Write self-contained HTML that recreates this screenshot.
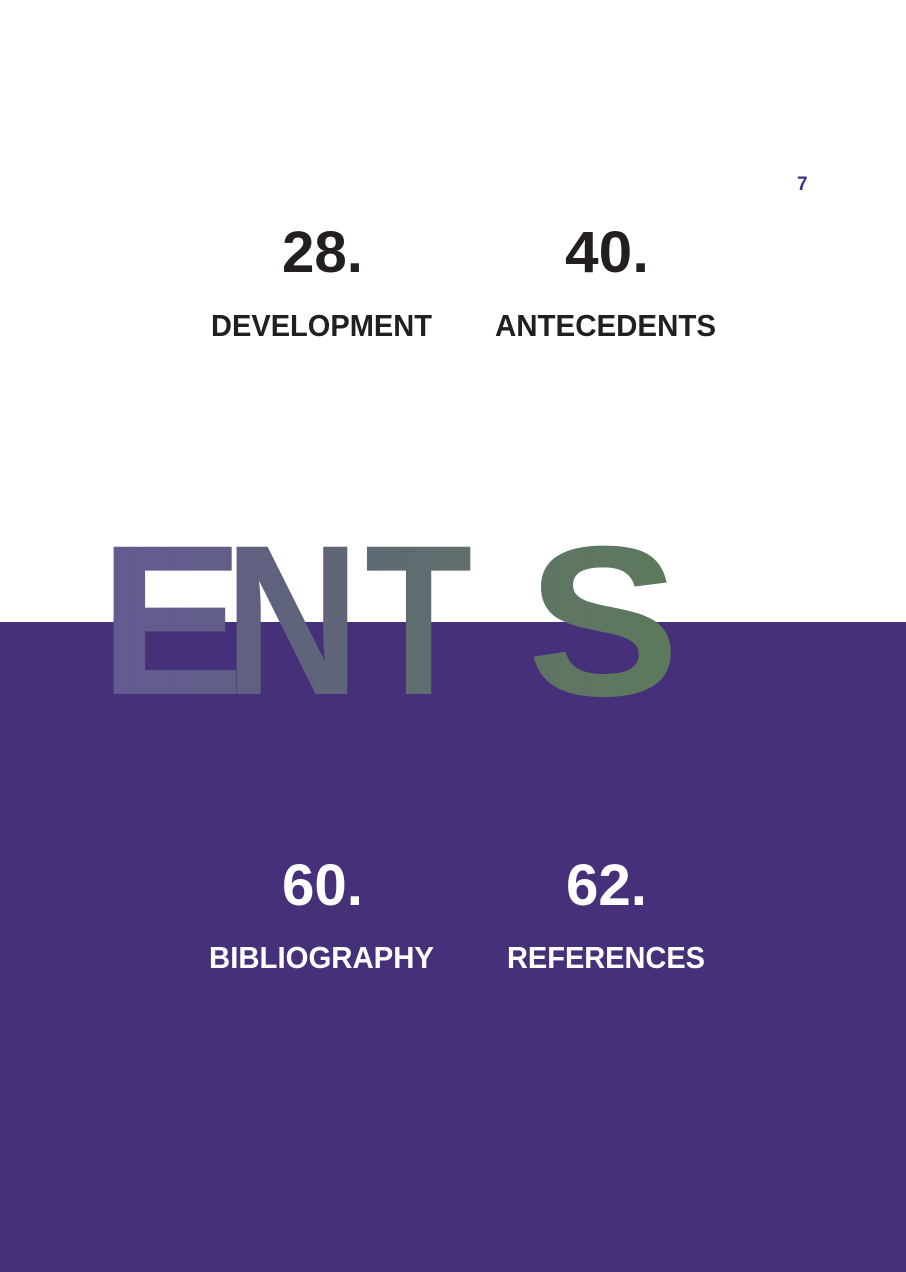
<!DOCTYPE html>
<html><head><meta charset="utf-8"><style>
html,body{margin:0;padding:0;background:#fff}
svg{display:block}
text{font-family:"Liberation Sans",Arial,sans-serif;font-weight:bold}
</style></head><body>
<svg width="906" height="1272" viewBox="0 0 906 1272" xmlns="http://www.w3.org/2000/svg">
<defs>
<linearGradient id="gE" x1="0" y1="0" x2="1" y2="0"><stop offset="0" stop-color="#645a92"/><stop offset="1" stop-color="#615f87"/></linearGradient>
<linearGradient id="gN" x1="0" y1="0" x2="1" y2="0"><stop offset="0" stop-color="#605f83"/><stop offset="1" stop-color="#5e6776"/></linearGradient>
<linearGradient id="gT" x1="0" y1="0" x2="1" y2="0"><stop offset="0" stop-color="#5e6a74"/><stop offset="1" stop-color="#5e706b"/></linearGradient>
<linearGradient id="gS" x1="0" y1="0" x2="1" y2="0"><stop offset="0" stop-color="#5e7465"/><stop offset="1" stop-color="#5d7a5b"/></linearGradient>
</defs>
<rect x="0" y="0" width="906" height="1272" fill="#fff"/>
<rect x="0" y="622" width="906" height="650" fill="#46307a"/>
<text x="797" y="190" font-size="19" fill="#46307a">7</text>
<g fill="#231f20">
<text x="282" y="272" font-size="58" textLength="81" lengthAdjust="spacingAndGlyphs">28.</text>
<text x="565" y="272" font-size="58" textLength="84" lengthAdjust="spacingAndGlyphs">40.</text>
<text x="211" y="336" font-size="31" textLength="221" lengthAdjust="spacingAndGlyphs">DEVELOPMENT</text>
<text x="495" y="336" font-size="31" textLength="221" lengthAdjust="spacingAndGlyphs">ANTECEDENTS</text>
</g>
<g font-size="214">
<text fill="url(#gE)" transform="translate(99,694) scale(1.02,1)">E</text>
<text fill="url(#gN)" transform="translate(224,694) scale(0.88,1)">N</text>
<text fill="url(#gT)" transform="translate(365,694) scale(0.82,1)">T</text>
<text fill="url(#gS)" transform="translate(527,695) scale(1.07,1)">S</text>
</g>
<g fill="#fff">
<text x="282" y="905" font-size="58" textLength="81" lengthAdjust="spacingAndGlyphs">60.</text>
<text x="566" y="905" font-size="58" textLength="81" lengthAdjust="spacingAndGlyphs">62.</text>
<text x="209" y="968" font-size="31" textLength="225" lengthAdjust="spacingAndGlyphs">BIBLIOGRAPHY</text>
<text x="507" y="968" font-size="31" textLength="198" lengthAdjust="spacingAndGlyphs">REFERENCES</text>
</g>
</svg>
</body></html>
